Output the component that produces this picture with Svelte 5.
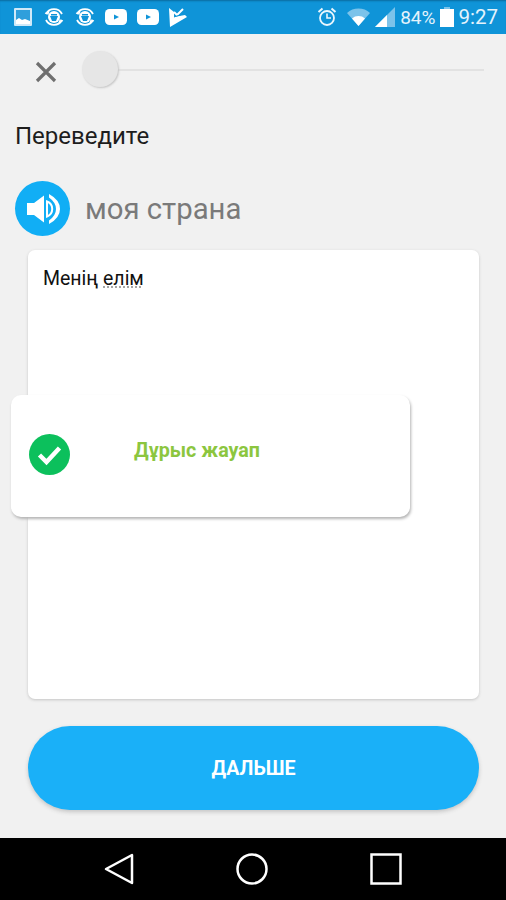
<script>
	let progress = $state(0);
</script>

<div class="screen">
	<header class="status">
		<div class="notif">
			<svg width="20" height="20" viewBox="0 0 20 20"><rect x="1" y="1" width="18" height="18" rx="1" fill="#cfe9f8" /><rect x="3" y="3" width="14" height="14" fill="#2f9fdc" /><path d="M3 17v-4l3-2 3 2 3-1 5 2v3z" fill="#fff" /></svg>
			<svg class="scan" width="20" height="22" viewBox="0 0 20 22"><path d="M2 8a9 9 0 0 1 16 0M2 14a9 9 0 0 0 16 0" fill="none" stroke="#fff" stroke-width="1.8" /><path d="M1 7l3 1 1-3M19 15l-3-1-1 3" fill="none" stroke="#fff" stroke-width="1.2" /><circle cx="10" cy="11" r="6" fill="#fff" /><path d="M6 10h8l-2 5H8z" fill="#0f94d8" /><rect x="7" y="8" width="6" height="1.5" fill="#0f94d8" /></svg>
			<svg class="scan" width="20" height="22" viewBox="0 0 20 22"><path d="M2 8a9 9 0 0 1 16 0M2 14a9 9 0 0 0 16 0" fill="none" stroke="#fff" stroke-width="1.8" /><path d="M1 7l3 1 1-3M19 15l-3-1-1 3" fill="none" stroke="#fff" stroke-width="1.2" /><circle cx="10" cy="11" r="6" fill="#fff" /><path d="M6 10h8l-2 5H8z" fill="#0f94d8" /><rect x="7" y="8" width="6" height="1.5" fill="#0f94d8" /></svg>
			<svg width="22" height="16" viewBox="0 0 22 16"><rect width="22" height="16" rx="4.500" fill="#fff" /><path d="M9 5.500l5 2.500-5 2.500z" fill="#0f94d8" /></svg>
			<svg width="22" height="16" viewBox="0 0 22 16"><rect width="22" height="16" rx="4.500" fill="#fff" /><path d="M9 5.500l5 2.500-5 2.500z" fill="#0f94d8" /></svg>
			<svg width="18" height="20" viewBox="0 0 18 20"><path d="M0 1l5 4v5l11-2 2 2L1 20z" fill="#fff" /><path d="M5 5l3 3 6-6" fill="none" stroke="#fff" stroke-width="2" /><path d="M5 10l3-1 6-2" fill="none" stroke="#0f94d8" stroke-width="1" /></svg>
		</div>
		<div class="system">
			<svg width="20" height="20" viewBox="0 0 20 20"><circle cx="10" cy="11" r="7" fill="none" stroke="#eaf6fd" stroke-width="1.8" /><path d="M10 6.500V11h4" fill="none" stroke="#eaf6fd" stroke-width="1.6" /><path d="M1.500 5l4-3.500M18.500 5l-4-3.500" stroke="#eaf6fd" stroke-width="2" /></svg>
			<svg class="wifi" width="23" height="18" viewBox="0 0 23 18"><path d="M0 5a17 17 0 0 1 23 0L11.500 18z" fill="#7cc3ea" /><path d="M5 10.500a10 10 0 0 1 13 0L11.500 18z" fill="#fff" /></svg>
			<svg class="signal" width="20" height="20" viewBox="0 0 20 20"><path d="M20 0v20H0z" fill="#7cc3ea" /><path d="M12 8v12H0z" fill="#fff" /></svg>
			<span class="pct">84%</span>
			<svg class="battery" width="14" height="20" viewBox="0 0 14 20"><rect x="4" y="0" width="6" height="2" fill="#7cc3ea" /><rect y="2" width="14" height="18" fill="#fff" /></svg>
			<span class="time">9:27</span>
		</div>
	</header>

	<main class="lesson">
		<div class="top-row">
			<button class="close" aria-label="Закрыть">
				<svg width="22" height="22" viewBox="0 0 22 22"><path d="M2 2l18 18M20 2L2 20" stroke="#6f6f6f" stroke-width="3.200" /></svg>
			</button>
			<div class="track">
				<div class="knob" style="left: {progress}%"></div>
			</div>
		</div>

		<h1>Переведите</h1>

		<div class="prompt">
			<button class="sound" aria-label="Прослушать">
				<svg width="34" height="34" viewBox="0 0 34 34"><path d="M0 11h7l10-7.500v27L7 23H0z" fill="#fff" /><path d="M20 9.500a8 8 0 0 1 0 15z" fill="none" stroke="#fff" stroke-width="2" /><path d="M22 2q11 6 11 15t-11 15v-3.500q7-5 7-11.500t-7-11.500z" fill="#fff" /></svg>
			</button>
			<span>моя страна</span>
		</div>

		<div class="answer">
			<p>Менің <span class="hint">елім</span></p>
			<div class="toast">
				<svg width="41" height="41" viewBox="0 0 41 41"><circle cx="20.500" cy="20.500" r="20.500" fill="#0cc05c" /><path d="M10.500 21l7 7 13-14" fill="none" stroke="#fff" stroke-width="4.500" /></svg>
				<span>Дұрыс жауап</span>
			</div>
		</div>

		<button class="next">ДАЛЬШЕ</button>
	</main>

	<nav class="navbar">
		<svg width="30" height="32" viewBox="0 0 30 32"><path d="M28 2v28L2 16z" fill="none" stroke="#fff" stroke-width="2.500" stroke-linejoin="round" /></svg>
		<svg width="32" height="32" viewBox="0 0 32 32"><circle cx="16" cy="16" r="14.500" fill="none" stroke="#fff" stroke-width="2.500" /></svg>
		<svg width="32" height="32" viewBox="0 0 32 32"><rect x="1.500" y="1.500" width="29" height="29" fill="none" stroke="#fff" stroke-width="2.500" /></svg>
	</nav>
</div>

<style>
	:global(body) {
		margin: 0;
		font-family: Roboto, "Noto Sans", sans-serif;
	}

	button {
		border: 0;
		padding: 0;
		background: none;
		font: inherit;
	}

	.screen {
		display: flex;
		flex-direction: column;
		height: 900px;
		background: #f1f1f1;
	}

	.status {
		display: flex;
		align-items: center;
		justify-content: space-between;
		height: 34px;
		padding: 0 8px 0 13px;
		background: #0f94d8;
		box-shadow: inset 0 2px 2px -1px #0b6a9e;
		color: #e4f3fc;
		flex-shrink: 0;
	}

	.notif,
	.system {
		display: flex;
		align-items: center;
	}

	.notif {
		gap: 10px;
	}

	.notif .scan {
		margin-left: 1px;
	}

	.system .wifi {
		margin-left: 10px;
	}

	.system .signal {
		margin-left: 5px;
	}

	.pct {
		margin-left: 5px;
		font-size: 19px;
	}

	.system .battery {
		margin-left: 5px;
	}

	.time {
		margin-left: 4px;
		font-size: 20.500px;
	}

	.lesson {
		flex: 1;
		min-height: 0;
		display: flex;
		flex-direction: column;
		padding: 0 27px 0 28px;
	}

	.top-row {
		display: flex;
		align-items: center;
		height: 72px;
		margin-right: -5px;
	}

	.close {
		display: flex;
		margin-left: 7px;
		margin-top: 4px;
	}

	.track {
		position: relative;
		flex: 1;
		height: 2px;
		margin-left: 25px;
		background: #e2e2e2;
	}

	.knob {
		position: absolute;
		top: -18px;
		width: 36px;
		height: 36px;
		border-radius: 50%;
		background: #e6e6e6;
		box-shadow: 1px 1px 2px #c6c6c6;
	}

	h1 {
		margin: 16px 0 0 -13px;
		font-size: 24px;
		font-weight: 400;
		line-height: 28px;
		color: #1d1d1d;
	}

	.prompt {
		display: flex;
		align-items: center;
		gap: 15px;
		margin: 31px 0 0 -13px;
		font-size: 29.300px;
		color: #7a7a7a;
	}

	.sound {
		display: flex;
		align-items: center;
		justify-content: center;
		width: 55px;
		height: 55px;
		padding-left: 3px;
		box-sizing: border-box;
		border-radius: 50%;
		background: #11aef5;
	}

	.answer {
		position: relative;
		height: 449px;
		margin-top: 14px;
		padding: 18px 15px;
		box-sizing: border-box;
		border-radius: 7px;
		background: #fff;
		box-shadow: 0 1px 3px #c4c4c4;
	}

	.answer p {
		margin: 0;
		font-size: 19.500px;
		line-height: 22px;
		color: #111;
	}

	.hint {
		text-decoration: underline dotted #a5a5a5 2px;
		text-underline-offset: 1px;
	}

	.toast {
		position: absolute;
		left: -17px;
		top: 145px;
		display: flex;
		align-items: center;
		width: 399px;
		height: 122px;
		box-sizing: border-box;
		padding: 0 0 4px 18px;
		border-radius: 10px;
		background: #fff;
		box-shadow: 1px 2px 3px #b4b4b4;
	}

	.toast span {
		margin: 0 0 8px 64px;
		font-size: 19.700px;
		font-weight: 700;
		color: #8cc63f;
	}

	.next {
		height: 84px;
		margin-top: 27px;
		border-radius: 42px;
		background: #1ab0f8;
		box-shadow: 0 2px 4px #c4c4c4;
		font-size: 19.600px;
		font-weight: 700;
		color: #fff;
	}

	.navbar {
		display: flex;
		align-items: center;
		justify-content: center;
		gap: 102px;
		height: 62px;
		flex-shrink: 0;
		background: #000;
	}
</style>
